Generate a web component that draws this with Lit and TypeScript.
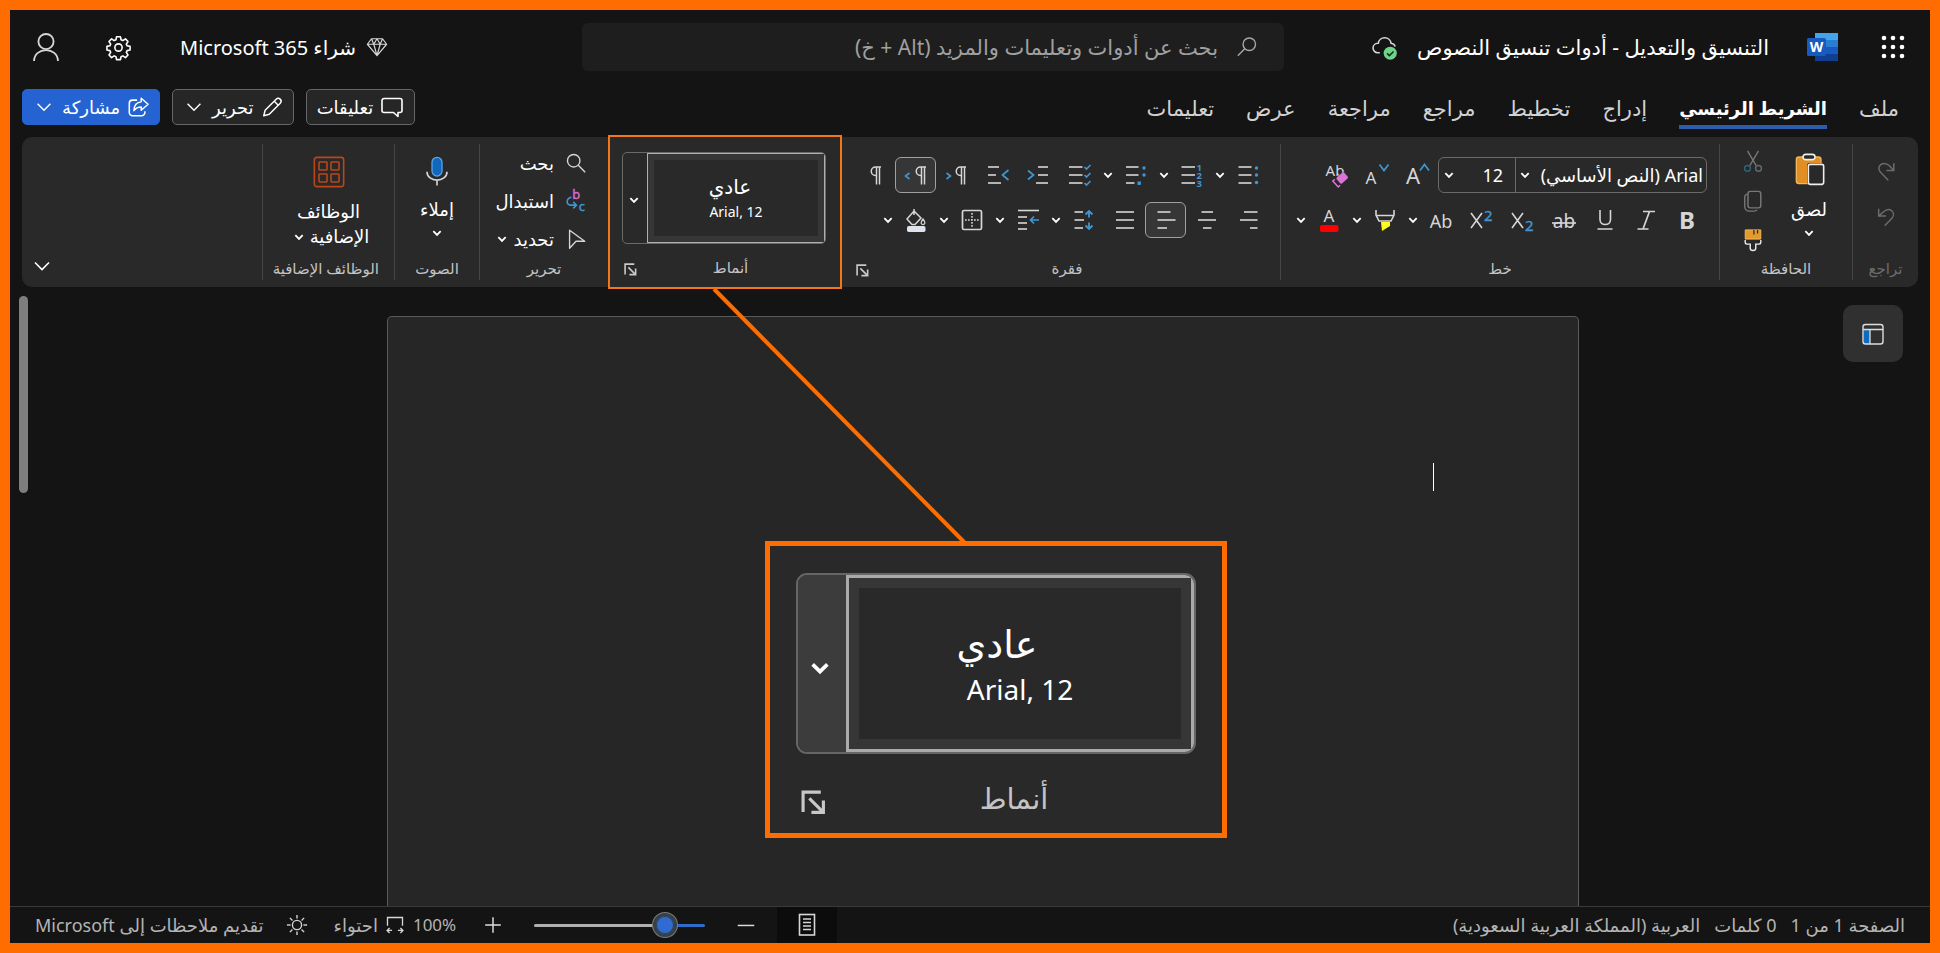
import { LitElement, html, svg, css, TemplateResult } from "lit";
import { customElement, property, state } from "lit/decorators.js";
import { classMap } from "lit/directives/class-map.js";

const lines = (rows: number[][]) =>
  rows.map(([x1, x2, y]) => svg`<path d="M${x1} ${y}H${x2}" stroke="#d6d6d6" stroke-width="1.6"/>`);

const three = (a: number, b: number) => lines([[a, b, 4], [a, b, 12], [a, b, 20]]);

const BLUE = "#3f96d2";
const GREY = "#d6d6d6";
const pilcrow = (x: number) => svg`<path transform="translate(${x} 0)" d="M12 4H6.500a4 4 0 0 0 0 8.500H7.500M7.500 4V21.500M10.500 4V21.500" stroke="${GREY}" stroke-width="1.500" fill="none"/>`;

const ICONS: Record<string, unknown> = {
  chevron: svg`<path d="M8 10l4 4 4-4" stroke="#fff" stroke-width="2" fill="none"/>`,
  chevronWide: svg`<path d="M5 8.500l7 7 7-7" stroke="#fff" stroke-width="1.600" fill="none"/>`,
  waffle: svg`${[3, 12, 21].map((x) => [3, 12, 21].map((y) => svg`<circle cx="${x}" cy="${y}" r="2.300" fill="#fff"/>`))}`,
  cloud: svg`<path d="M7.500 17H5.500a4.500 4.500 0 0 1 0-9H6a6.200 6.200 0 0 1 12.300 0 5 5 0 0 1 4 3" stroke="${GREY}" stroke-width="1.500" fill="none"/>
    <circle cx="17.500" cy="17.500" r="6.300" fill="#6fd487"/><path d="M14.500 17.600l2.200 2.200 4-4" stroke="#14301b" stroke-width="1.500" fill="none"/>`,
  search: svg`<circle cx="9.500" cy="9.500" r="6.800" stroke="${GREY}" stroke-width="1.500" fill="none"/><path d="M14.500 14.500L22 22" stroke="${GREY}" stroke-width="1.500"/>`,
  searchFlip: svg`<circle cx="14.500" cy="9" r="6.800" stroke="#a8a8a8" stroke-width="1.500" fill="none"/><path d="M9.500 14L2 21.500" stroke="#a8a8a8" stroke-width="1.500"/>`,
  gem: svg`<path d="M6 3h12l4.500 6L12 21.500 1.500 9zM1.500 9h21M6 3l2.500 6L12 21.500 15.500 9 18 3M8.500 9L12 3l3.500 6" stroke="${GREY}" stroke-width="1.300" fill="none" stroke-linejoin="round"/>`,
  gear: svg`<circle cx="12" cy="12" r="3.500" stroke="#fff" stroke-width="1.500" fill="none"/>
    <path d="M10 1.500h4l.6 3 1.800.8 2.600-1.700 2.600 2.700-1.700 2.600.8 1.700 3 .6v3.700l-3 .6-.8 1.800 1.700 2.600-2.600 2.600-2.600-1.700-1.800.8-.6 3h-4l-.6-3-1.800-.8L5 22.500l-2.600-2.600 1.700-2.600-.8-1.800-3-.6v-3.700l3-.6.8-1.700L2.400 6.300 5 3.600l2.600 1.700 1.800-.8z" transform="translate(.6 .3) scale(.95)" stroke="#fff" stroke-width="1.600" fill="none" stroke-linejoin="round"/>`,
  person: svg`<circle cx="12" cy="7" r="7" stroke="${GREY}" stroke-width="1.700" fill="none"/><path d="M1 24c0-13.500 22-13.500 22 0" stroke="${GREY}" stroke-width="1.700" fill="none" transform="translate(0 1)"/>`,
  comment: svg`<path d="M4 3.500h16a2 2 0 0 1 2 2v10a2 2 0 0 1-2 2h-2v4l-4.500-4H4a2 2 0 0 1-2-2v-10a2 2 0 0 1 2-2z" stroke="#fff" stroke-width="1.600" fill="none" stroke-linejoin="round"/>`,
  pencil: svg`<path d="M3 21.500l1.500-6L16.500 3.500a3 3 0 0 1 4.500 4.300L9 20zM14.500 5.800l4.300 4.200" stroke="#fff" stroke-width="1.600" fill="none" stroke-linejoin="round"/>`,
  share: svg`<path d="M11 4.500H6A3.500 3.500 0 0 0 2.500 8v10A3.500 3.500 0 0 0 6 21.500h10a3.500 3.500 0 0 0 3.500-3.500v-1.500" stroke="#fff" stroke-width="1.700" fill="none"/>
    <path d="M15.500 2.500L23 9l-7.500 6.500V12c-4 0-6 1.300-8 4 .3-5.500 3-9.300 8-9.600z" stroke="#fff" stroke-width="1.600" fill="none" stroke-linejoin="round"/>`,
  redo: svg`<path d="M20.500 3.500v8h-8M20 11L16 6.500C9 0 .5 7 6 13.500L14.500 22" stroke="#6c6c6c" stroke-width="1.600" fill="none"/>`,
  undo: svg`<path d="M4 3v8h8M4.500 10.500L9 6.500C16 0 23.500 7 18.500 13.500L10.500 21.500" stroke="#6c6c6c" stroke-width="1.600" fill="none"/>`,
  paste: svg`<rect x="2.500" y="3" width="18.500" height="20" rx="2" fill="#e08f22" stroke="#f0b75e" stroke-width="1"/>
    <rect x="7.500" y="1" width="9" height="4" rx="2" fill="#292929" stroke="#eee" stroke-width="1.200"/>
    <rect x="10.500" y="7.500" width="13" height="16" rx="2" fill="#292929"/><rect x="11.500" y="8.500" width="11.500" height="15" rx="1.500" fill="#292929" stroke="#eee" stroke-width="1.200"/>`,
  cut: svg`<path d="M6 1l9.500 16M18 1L8.500 17" stroke="#777" stroke-width="1.500"/><circle cx="6" cy="20" r="3.200" stroke="#2f6477" stroke-width="1.600" fill="none"/><circle cx="18" cy="20" r="3.200" stroke="#5a6c73" stroke-width="1.600" fill="none"/>`,
  copy: svg`<rect x="6.500" y="1.500" width="14" height="18" rx="2.500" stroke="#777" stroke-width="1.600" fill="none"/><path d="M6 4.500c-2 .5-3 1.500-3 3V18a5 5 0 0 0 5 5h5c2 0 3-.5 3.500-1.500" stroke="#777" stroke-width="1.500" fill="none"/>`,
  painter: svg`<path d="M3.500 1h17v10h-17z" fill="#e39a2c" stroke="#f2bb62"/><path d="M13 1v5M17 1v4" stroke="#292929" stroke-width="1.300"/>
    <path d="M3.500 12v2.500q0 2 2 2H9V21q0 2.500 3 2.500t3-2.500v-4.500h3.500q2 0 2-2V12" stroke="#eee" stroke-width="1.500" fill="none"/>`,
  bold: svg`<text x="12" y="21" text-anchor="middle" font-size="24" font-weight="700" fill="${GREY}">B</text>`,
  italic: svg`<path d="M9 3.500h12M3.500 21h11M15.500 3.500L9 21" stroke="${GREY}" stroke-width="1.700"/>`,
  underline: svg`<path d="M7 2v9.500c0 6.700 10.500 6.700 10.500 0V2M4.500 21h15" stroke="${GREY}" stroke-width="1.600" fill="none"/>`,
  strike: svg`<text x="12" y="20" text-anchor="middle" font-size="19" fill="${GREY}">ab</text><path d="M0 15h24" stroke="${GREY}" stroke-width="1.600"/>`,
  sub: svg`<path d="M1 5l11 15M12 5L1 20" stroke="${GREY}" stroke-width="1.600"/><text x="14" y="23" font-size="15" fill="${BLUE}" stroke="${BLUE}" stroke-width=".4">2</text>`,
  sup: svg`<path d="M1 5l11 15M12 5L1 20" stroke="${GREY}" stroke-width="1.600"/><text x="14" y="13" font-size="15" fill="${BLUE}" stroke="${BLUE}" stroke-width=".4">2</text>`,
  changeCase: svg`<text x="12" y="20" text-anchor="middle" font-size="18" fill="${GREY}">Ab</text>`,
  highlight: svg`<path d="M3 2v5l3 6h12l3-6V2M3 7.500h18" stroke="${GREY}" stroke-width="1.600" fill="none"/><path d="M8 14h9v4l-8 5z" fill="#ffff1f"/>`,
  fontColor: svg`<text x="12" y="14" text-anchor="middle" font-size="17" fill="${GREY}">A</text><rect x="3" y="17" width="18.500" height="7" rx="2" fill="#f00"/>`,
  grow: svg`<text x="7" y="21" text-anchor="middle" font-size="22" fill="${GREY}">A</text><path d="M14 7.500l4.500-6 4.500 6" stroke="${BLUE}" stroke-width="1.700" fill="none"/>`,
  shrink: svg`<text x="6" y="21" text-anchor="middle" font-size="17" fill="${GREY}">A</text><path d="M14.500 1.500l4.500 6 4.500-6" stroke="${BLUE}" stroke-width="1.700" fill="none"/>`,
  clear: svg`<text x="11" y="13" text-anchor="middle" font-size="15" fill="${GREY}">Ab</text><g transform="rotate(-42 16 17)"><rect x="9" y="13" width="15" height="9" rx="2" fill="#292929"/><rect x="14" y="13" width="10" height="8" rx="1.500" fill="#db74d6"/><path d="M12.500 13H10v8h2.500" stroke="#db74d6" stroke-width="1.500" fill="none"/></g>`,
  bullets: svg`${three(2.5, 15.5)}${[5, 12, 19.5].map((y) => svg`<circle cx="20.500" cy="${y}" r="1.700" fill="${BLUE}"/>`)}`,
  numbering: svg`${three(1.5, 15)}${["1", "2", "3"].map((t, i) => svg`<text x="16.500" y="${7.5 + i * 8}" font-size="9.500" font-weight="700" fill="${BLUE}">${t}</text>`)}`,
  multilevel: svg`${lines([[2, 14.5, 4], [2, 14.5, 12], [2, 10.5, 20]])}<circle cx="20" cy="5" r="1.700" fill="${BLUE}"/><circle cx="20" cy="12" r="1.700" fill="${BLUE}"/><rect x="13.500" y="18.500" width="3.400" height="3.400" fill="${BLUE}"/>`,
  checks: svg`${three(1, 14.5)}${[4, 12, 20].map((y) => svg`<path d="M16.500 ${y}l2 2 4-4" stroke="${BLUE}" stroke-width="1.600" fill="none"/>`)}`,
  indentIn: svg`${lines([[11, 21, 4], [11, 21, 12], [9, 21, 20]])}<path d="M1 7.500l5.500 4.500L1 16.500" stroke="${BLUE}" stroke-width="1.700" fill="none"/>`,
  indentOut: svg`${lines([[2, 13, 4], [2, 10, 12], [2, 15, 20]])}<path d="M22.500 7L16.500 12l6 5" stroke="${BLUE}" stroke-width="1.700" fill="none"/>`,
  ltr: svg`${pilcrow(9)}<path d="M1.500 10l4 3-4 3" stroke="${BLUE}" stroke-width="1.600" fill="none"/>`,
  rtl: svg`${pilcrow(10)}<path d="M5.500 10l-4 3 4 3" stroke="${BLUE}" stroke-width="1.600" fill="none"/>`,
  marks: pilcrow(6),
  alignRight: lines([[8, 21.5, 4], [4, 21.5, 12], [14, 21.5, 20]]),
  alignCenter: lines([[6.5, 18, 4], [3, 21, 12], [8, 16.5, 20]]),
  alignLeft: lines([[3.5, 16.5, 4], [3.5, 21.5, 12], [3.5, 13, 20]]),
  justify: three(3, 21),
  spacing: svg`${lines([[2.5, 11, 4], [2.5, 12, 12], [2.5, 11, 20]])}<path d="M17 3v6.500M13.500 6.500L17 3l3.500 3.500M17 14.500V21M13.500 17.500L17 21l3.500-3.500" stroke="${BLUE}" stroke-width="1.800" fill="none"/>`,
  special: svg`${lines([[2, 23, 2.5], [2, 11, 9], [2, 11, 15], [2, 11, 21]])}<path d="M14.500 12H23M18 8.500L14.500 12l3.500 3.500" stroke="${BLUE}" stroke-width="1.700" fill="none"/>`,
  borders: svg`<rect x="2.500" y="2.500" width="19" height="19" rx="1.500" stroke="${GREY}" stroke-width="1.700" fill="none"/><path d="M12 5v14M5 12h14" stroke="${GREY}" stroke-width="1.500" stroke-dasharray="1.700 1.300"/>`,
  bucket: svg`<path d="M10 1v6M10 3l7 7-6 6.500H8L3 11z" stroke="${GREY}" stroke-width="1.500" fill="none"/><path d="M19 11c3 4 2 5.500 0 5.500s-3-1.500 0-5.500z" stroke="${GREY}" stroke-width="1.300" fill="none"/><rect x="3" y="18" width="18.500" height="6" rx="1.800" fill="#dde3ea"/>`,
  replace: svg`<text x="8" y="10" font-size="14" fill="#d16bd0" stroke="#d16bd0" stroke-width=".5">b</text><text x="15" y="23" font-size="14" fill="${BLUE}" stroke="${BLUE}" stroke-width=".5">c</text><path d="M7 8C1 9 1 16.500 6 16.500h6M9 13l3.500 3.500L9 20" stroke="${BLUE}" stroke-width="1.700" fill="none"/>`,
  select: svg`<path d="M5 2.500L21.500 14.500H12L5 22z" stroke="${GREY}" stroke-width="1.500" fill="none" stroke-linejoin="round"/>`,
  mic: svg`<rect x="8" y="1" width="8" height="15" rx="4" fill="#1267bd" stroke="#5aa8e8" stroke-width="1"/><path d="M4 12.500c0 9 16 9 16 0M12 19.500V23.500" stroke="${GREY}" stroke-width="1.300" fill="none"/>`,
  addins: svg`<g stroke="#b8471c" stroke-width="1.200" fill="none"><rect x="1" y="1" width="22" height="22" rx="2"/><rect x="4.500" y="4.500" width="6" height="6" rx=".5"/><rect x="13.500" y="4.500" width="6" height="6" rx=".5"/><rect x="4.500" y="13.500" width="6" height="6" rx=".5"/><rect x="13.500" y="13.500" width="6" height="6" rx=".5"/></g>`,
  launcher: svg`<path d="M2 21V2H19M8 8L21 21M21.500 10V21.500H10" stroke="#c8c8c8" stroke-width="3" fill="none"/>`,
  pane: svg`<path d="M3 8h6v14H4.500L3 20.500z" fill="#0f6cbd"/><rect x="2" y="2.500" width="20" height="19.500" rx="2.500" stroke="#ddd" stroke-width="1.400" fill="none"/><path d="M2 7.500h20M9 8v14" stroke="#ddd" stroke-width="1.300"/>`,
  pageView: svg`<rect x="4.500" y="1.500" width="15" height="20.500" stroke="${GREY}" stroke-width="1.600" fill="none"/><path d="M8 6h8M8 9.500h8M8 13h8M8 16.500h8" stroke="${GREY}" stroke-width="1.400"/>`,
  minus: svg`<path d="M3 12.500h18" stroke="#ddd" stroke-width="1.600"/>`,
  plus: svg`<path d="M3.500 12h17M12 3.500v17" stroke="#ddd" stroke-width="1.600"/>`,
  fit: svg`<path d="M3 13V3h18v10" stroke="${GREY}" stroke-width="1.600" fill="none"/><path d="M2.500 18.500h6M15.500 18.500h6M5.500 15.500l-3 3 3 3M18.500 15.500l3 3-3 3" stroke="${GREY}" stroke-width="1.600" fill="none"/>`,
  sun: svg`<circle cx="12" cy="12" r="5" stroke="${GREY}" stroke-width="1.500" fill="none"/>${[0, 45, 90, 135, 180, 225, 270, 315].map((a) => svg`<path d="M12 1v4" stroke="${GREY}" stroke-width="1.500" transform="rotate(${a} 12 12)"/>`)}`,
};

const icon = (name: string, size = 22): TemplateResult =>
  html`<svg class="icon" width=${size} height=${size} viewBox="0 0 24 24" aria-hidden="true">${ICONS[name]}</svg>`;

const shared = css`
  * { box-sizing: border-box; }
  button, input, a { font: inherit; color: inherit; }
  button { background: none; border: 0; padding: 0; cursor: pointer; display: inline-flex; align-items: center; justify-content: center; white-space: nowrap; }
  .icon { display: block; flex: none; overflow: visible; direction: ltr; }
`;

@customElement("style-gallery")
class StyleGallery extends LitElement {
  @property({ type: Boolean, reflect: true }) large = false;

  static styles = [shared, css`
    :host { display: flex; flex-direction: column; flex: 1; color: #fff; }
    .gallery { display: flex; height: 92px; margin: 0 14px; border: 1px solid #6a6a6a; border-radius: 5px; overflow: hidden; }
    .item { flex: 1; flex-direction: column; border: 1px solid #b0b0b0; box-shadow: inset 0 0 0 6px #363636; }
    .name { padding-right: 12px; font-size: 20px; line-height: 28px; }
    .font { font-size: 14px; line-height: 22px; }
    .more { width: 24px; padding: 4px 2px 0 0; }
    .foot { display: flex; align-items: center; margin-top: 11px; padding: 0 16px; color: #c4c4c4; font-size: 15px; line-height: 24px; }
    .caption { flex: 1; text-align: center; }
    .launch { padding-top: 4px; }
    :host([large]) .gallery { height: 181px; margin: 0 26px; border: 2px solid #666; border-radius: 11px; }
    :host([large]) .item { border: 3px solid #aaa; box-shadow: inset 0 0 0 10px #363636; }
    :host([large]) .name { padding-right: 46px; font-size: 38px; line-height: 50px; }
    :host([large]) .font { font-size: 28px; line-height: 42px; }
    :host([large]) .more { width: 48px; padding: 8px 4px 0 0; background: #3c3c3c; }
    :host([large]) .foot { margin-top: 22px; padding: 0 20px 0 31px; font-size: 29px; line-height: 44px; }
    :host([large]) .launch { padding-top: 8px; }
  `];

  render() {
    const big = this.large;
    return html`
      <div class="gallery">
        <button class="item"><span class="name">عادي</span><span class="font" dir="ltr">Arial, 12</span></button>
        <button class="more" aria-label="المزيد من الأنماط">${icon("chevron", big ? 44 : 22)}</button>
      </div>
      <div class="foot">
        <span class="caption">أنماط</span>
        <button class="launch" aria-label="خيارات الأنماط">${icon("launcher", big ? 25 : 13)}</button>
      </div>`;
  }
}

@customElement("app-root")
class AppRoot extends LitElement {
  @state() private tab = 1;
  @state() private zoom = 81;

  private tabs = ["ملف", "الشريط الرئيسي", "إدراج", "تخطيط", "مراجع", "مراجعة", "عرض", "تعليمات"];

  static styles = [shared, css`
    :host { display: block; height: 100vh; font-family: "Noto Sans", "DejaVu Sans", sans-serif; color: #fff; }
    .app { position: relative; display: flex; flex-direction: column; height: 100%; min-height: 600px; border: 10px solid #ff6d00; background: #141414; overflow: hidden; }

    .titlebar { display: grid; grid-template-columns: 646fr 702fr 572fr; align-items: center; height: 74px; }
    .side { display: flex; align-items: center; white-space: nowrap; }
    .start { padding-right: 25px; }
    .waffle { margin-left: 43px; }
    .word { margin-left: 38px; }
    .doc-title { font-size: 21px; font-weight: 400; margin: 0 0 0 20px; }
    .end { justify-content: flex-end; padding-left: 23px; }
    .buy { gap: 10px; margin-left: 49px; font-size: 20px; }
    .settings { margin-left: 47px; }
    .search { display: flex; align-items: center; gap: 18px; height: 48px; padding: 0 26px; border-radius: 6px; background: #1e1e1e; }
    .search input { flex: 1; min-width: 0; background: none; border: 0; outline: 0; padding: 0; font-size: 21px; color: #a8a8a8; }
    .search input::placeholder { color: #a0a0a0; opacity: 1; }

    .tabrow { display: flex; align-items: center; justify-content: space-between; height: 53px; padding: 0 31px 9px 12px; }
    .tabs { display: flex; gap: 32px; padding-top: 7px; }
    .tab { flex-direction: column; font-size: 21px; line-height: 34px; color: #d2d2d2; border-bottom: 4px solid transparent; }
    .tab.active { font-size: 18px; font-weight: 700; color: #fff; border-color: #2c5cab; }
    .actions { display: flex; gap: 12px; padding-top: 1px; font-size: 18px; }
    .action { height: 36px; gap: 7px; padding: 0 10px; border: 1px solid #666; border-radius: 5px; background: #262626; }
    .share { background: #2463d1; border-color: #2463d1; }

    .ribbon { display: flex; height: 150px; margin: 0 12px; padding: 7px 0; border-radius: 10px; background: #292929; }
    .group { display: flex; flex-direction: column; flex: none; border-left: 1px solid #454545; }
    .caption { display: flex; align-items: center; margin-top: auto; padding: 0 15px 2px; font-size: 15px; line-height: 20px; color: #c4c4c4; white-space: nowrap; }
    .caption .text { flex: 1; display: flex; justify-content: center; }
    .caption .launch { padding-top: 4px; }
    .undo { width: 66px; align-items: center; }
    .undo .caption { color: #6c6c6c; }
    .stack { display: flex; flex-direction: column; align-items: center; justify-content: space-between; }
    .undo .stack { height: 84px; padding: 16px 0 0; }
    .clipboard { width: 133px; }
    .clip { display: flex; justify-content: space-between; padding: 6px 25px 0 22px; height: 108px; }
    .clip .stack { padding-bottom: 1px; }
    .bigbtn { flex-direction: column; justify-content: flex-start; font-size: 18px; line-height: 25px; }
    .paste { padding-top: 3px; }
    .paste .label { margin-top: 12px; }
    .font { width: 439px; }
    .paragraph { width: 440px; }
    .row { display: flex; height: 36px; margin-bottom: 9px; padding-right: 12px; }
    .row.first { margin-top: 13px; }
    .tool { width: 41px; height: 36px; border: 1px solid transparent; border-radius: 6px; }
    .tool.on { border-color: #a0a0a0; background: #363636; }
    .drop { flex: none; width: 15px; height: 36px; }
    .combo { display: flex; width: 269px; height: 36px; border: 1px solid #6a6a6a; border-radius: 6px; }
    .combo input { flex: 1; width: 0; min-width: 0; background: none; border: 0; outline: 0; padding: 0; color: #fff; font-size: 18px; }
    .name-box { display: flex; flex: 1; min-width: 0; padding-right: 3px; }
    .size-box { display: flex; flex: none; width: 77px; padding: 0 12px 0 2px; border-right: 1px solid #6a6a6a; }
    .combo .drop { height: 34px; }
    .name-box .drop { width: 18px; }
    .styles { width: 232px; padding-top: 8px; border-left: 0; }
    .editing { width: 129px; }
    .commands { display: flex; flex-direction: column; padding-right: 21px; font-size: 18px; }
    .command { justify-content: flex-start; gap: 11px; height: 38px; }
    .voice { width: 85px; }
    .addins { width: 132px; }
    .voice .bigbtn, .addins .bigbtn { padding-top: 12px; }
    .voice .label, .addins .label { margin-top: 11px; }
    .line { display: flex; align-items: center; }
    .rest { flex: 1; display: flex; justify-content: flex-end; align-items: flex-end; padding: 0 8px 2px; }

    .workspace { flex: 1; min-height: 0; display: flex; flex-direction: row-reverse; position: relative; overflow: hidden; }
    .scroll { width: 26px; padding: 9px 8px 0 9px; }
    .thumb { height: 197px; border-radius: 5px; background: #7e7e7e; }
    .canvas { flex: 1; display: flex; justify-content: center; padding-top: 29px; }
    .page { width: 1192px; padding: 146px 144px; background: #262626; border: 1px solid #5a5a5a; border-bottom: 0; border-radius: 5px 5px 0 0; }
    .caret { width: 1px; height: 28px; background: #fff; }
    .pane { position: absolute; top: 18px; right: 27px; width: 60px; height: 57px; border-radius: 10px; background: #303030; }

    .status { display: flex; align-items: center; justify-content: space-between; height: 37px; border-top: 1px solid #3a3a3a; font-size: 18px; line-height: 24px; color: #b4b4b4; padding: 0 25px; white-space: nowrap; }
    .facts { display: flex; gap: 14px; }
    .tools { display: flex; align-items: center; height: 100%; }
    .view { width: 60px; height: 36px; background: #0c0c0c; margin-left: 20px; }
    .slider { appearance: none; width: 171px; height: 24px; margin: 0 30px; background: none; }
    .slider::-webkit-slider-runnable-track { height: 3px; border-radius: 2px; background: linear-gradient(to left, #2f6bc9 24%, #b0b0b0 24%); }
    .slider::-webkit-slider-thumb { appearance: none; width: 24px; height: 24px; margin-top: -11px; border-radius: 50%; background: #2f6bd0; border: 3px solid #34404c; box-shadow: inset 0 0 0 1px #34404c, 0 0 0 1px #7c7c70; }
    .percent { margin: 0 26px 0 8px; font-size: 17px; }
    .fit { gap: 7px; margin-left: 26px; }
    .feedback { margin-right: 22px; text-decoration: none; }

    .frame { position: absolute; left: 598px; top: 125px; width: 234px; height: 154px; border: 2px solid #f5761a; pointer-events: none; }
    .leader { position: absolute; left: 704px; top: 278px; pointer-events: none; }
    .zoomed { position: absolute; left: 755px; top: 531px; width: 462px; height: 297px; display: flex; padding-top: 27px; border: 5px solid #ff6d00; background: #292929; }
  `];

  private tool(name: string, label: string, opts: { drop?: boolean; on?: boolean } = {}) {
    return html`<button class=${classMap({ tool: true, on: !!opts.on })} aria-label=${label}>${icon(name, 24)}</button>
      ${opts.drop ? html`<button class="drop" aria-label="خيارات ${label}">${icon("chevron", 22)}</button>` : ""}`;
  }

  render() {
    return html`<div class="app" dir="rtl">
      <header class="titlebar">
        <div class="side start">
          <button class="waffle" aria-label="مشغل التطبيقات">${icon("waffle", 24)}</button>
          <svg class="icon word" width="31" height="28" viewBox="0 0 31 28" aria-hidden="true">
            <path d="M8 0h23v7H8z" fill="#41a5ee"/><path d="M8 7h23v7H8z" fill="#2b7cd3"/><path d="M8 14h23v7H8z" fill="#185abd"/><path d="M8 21h23v7H8z" fill="#103f91"/>
            <rect y="5" width="19" height="18" rx="1.500" fill="#185abd"/><text x="9.500" y="19" text-anchor="middle" font-size="14" font-weight="700" fill="#fff">W</text>
          </svg>
          <h1 class="doc-title">التنسيق والتعديل - أدوات تنسيق النصوص</h1>
          ${icon("cloud", 25)}
        </div>
        <label class="search">${icon("searchFlip", 22)}<input type="search" aria-label="بحث" placeholder="بحث عن أدوات وتعليمات والمزيد (Alt + خ)" /></label>
        <div class="side end">
          <button class="buy">${icon("gem", 22)}<span>شراء Microsoft 365</span></button>
          <button class="settings" aria-label="الإعدادات">${icon("gear", 25)}</button>
          <button aria-label="الحساب">${icon("person", 26)}</button>
        </div>
      </header>

      <div class="tabrow">
        <nav class="tabs">
          ${this.tabs.map((t, i) => html`<button class=${classMap({ tab: true, active: i === this.tab })} @click=${() => (this.tab = i)}>${t}</button>`)}
        </nav>
        <div class="actions">
          <button class="action">${icon("comment", 24)}<span>تعليقات</span></button>
          <button class="action">${icon("pencil", 22)}<span>تحرير</span>${icon("chevronWide", 22)}</button>
          <button class="action share">${icon("share", 22)}<span>مشاركة</span>${icon("chevronWide", 22)}</button>
        </div>
      </div>

      <section class="ribbon">
        <div class="group undo">
          <div class="stack"><button aria-label="إعادة">${icon("redo", 22)}</button><button aria-label="تراجع">${icon("undo", 22)}</button></div>
          <div class="caption"><span class="text">تراجع</span></div>
        </div>
        <div class="group clipboard">
          <div class="clip">
            <button class="bigbtn paste">${icon("paste", 32)}<span class="label">لصق</span>${icon("chevron", 22)}</button>
            <div class="stack">
              <button aria-label="قص">${icon("cut", 22)}</button>
              <button aria-label="نسخ">${icon("copy", 22)}</button>
              <button aria-label="نسخ التنسيق">${icon("painter", 22)}</button>
            </div>
          </div>
          <div class="caption"><span class="text">الحافظة</span></div>
        </div>
        <div class="group font">
          <div class="row first">
            <div class="combo">
              <div class="name-box"><input aria-label="الخط" value="Arial (النص الأساسي)" /><button class="drop" aria-label="قائمة الخطوط">${icon("chevron", 22)}</button></div>
              <div class="size-box"><input aria-label="حجم الخط" value="12" /><button class="drop" aria-label="قائمة الأحجام">${icon("chevron", 22)}</button></div>
            </div>
            ${this.tool("grow", "تكبير الخط")}${this.tool("shrink", "تصغير الخط")}${this.tool("clear", "مسح التنسيق")}
          </div>
          <div class="row">
            ${this.tool("bold", "غامق")}${this.tool("italic", "مائل")}${this.tool("underline", "تسطير")}${this.tool("strike", "يتوسطه خط")}
            ${this.tool("sub", "منخفض")}${this.tool("sup", "مرتفع")}${this.tool("changeCase", "تغيير الحالة", { drop: true })}
            ${this.tool("highlight", "تمييز", { drop: true })}${this.tool("fontColor", "لون الخط", { drop: true })}
          </div>
          <div class="caption"><span class="text">خط</span></div>
        </div>
        <div class="group paragraph">
          <div class="row first">
            ${this.tool("bullets", "تعداد نقطي", { drop: true })}${this.tool("numbering", "ترقيم", { drop: true })}${this.tool("multilevel", "قائمة متعددة", { drop: true })}
            ${this.tool("checks", "قائمة اختيار")}${this.tool("indentIn", "زيادة المسافة")}${this.tool("indentOut", "إنقاص المسافة")}
            ${this.tool("ltr", "من اليسار")}${this.tool("rtl", "من اليمين", { on: true })}${this.tool("marks", "علامات الفقرة")}
          </div>
          <div class="row">
            ${this.tool("alignRight", "يمين")}${this.tool("alignCenter", "توسيط")}${this.tool("alignLeft", "يسار", { on: true })}${this.tool("justify", "ضبط")}
            ${this.tool("spacing", "تباعد", { drop: true })}${this.tool("special", "مسافة خاصة", { drop: true })}${this.tool("borders", "حدود", { drop: true })}${this.tool("bucket", "تظليل", { drop: true })}
          </div>
          <div class="caption"><span class="text">فقرة</span><button class="launch" aria-label="خيارات الفقرة">${icon("launcher", 13)}</button></div>
        </div>
        <div class="group styles"><style-gallery></style-gallery></div>
        <div class="group editing">
          <div class="commands">
            <button class="command">${icon("search", 22)}<span>بحث</span></button>
            <button class="command">${icon("replace", 22)}<span>استبدال</span></button>
            <button class="command">${icon("select", 22)}<span class="line">تحديد ${icon("chevron", 22)}</span></button>
          </div>
          <div class="caption"><span class="text">تحرير</span></div>
        </div>
        <div class="group voice">
          <button class="bigbtn">${icon("mic", 30)}<span class="label">إملاء</span>${icon("chevron", 22)}</button>
          <div class="caption"><span class="text">الصوت</span></div>
        </div>
        <div class="group addins">
          <button class="bigbtn">${icon("addins", 32)}<span class="label">الوظائف</span><span class="line">الإضافية ${icon("chevron", 22)}</span></button>
          <div class="caption"><span class="text">الوظائف الإضافية</span></div>
        </div>
        <div class="rest"><button aria-label="طي الشريط">${icon("chevronWide", 24)}</button></div>
      </section>

      <main class="workspace">
        <div class="scroll"><div class="thumb"></div></div>
        <div class="canvas"><article class="page"><div class="caret"></div></article></div>
        <button class="pane" aria-label="جزء التنقل">${icon("pane", 24)}</button>
      </main>

      <footer class="status">
        <div class="facts"><span>الصفحة 1 من 1</span><span>0 كلمات</span><span>العربية (المملكة العربية السعودية)</span></div>
        <div class="tools">
          <button class="view" aria-label="عرض الصفحة">${icon("pageView", 24)}</button>
          <button aria-label="تصغير">${icon("minus", 22)}</button>
          <input class="slider" type="range" aria-label="التكبير" min="0" max="100" .value=${String(100 - this.zoom)} />
          <button aria-label="تكبير">${icon("plus", 22)}</button>
          <span class="percent" dir="ltr">100%</span>
          <button class="fit">${icon("fit", 20)}<span>احتواء</span></button>
          ${icon("sun", 22)}
          <a class="feedback" href="#feedback">تقديم ملاحظات إلى Microsoft</a>
        </div>
      </footer>

      <div class="frame"></div>
      <svg class="icon leader" width="256" height="258" viewBox="0 0 256 258" aria-hidden="true"><path d="M0 1L252 256" stroke="#ff6d00" stroke-width="4"/></svg>
      <div class="zoomed"><style-gallery large></style-gallery></div>
    </div>`;
  }
}
